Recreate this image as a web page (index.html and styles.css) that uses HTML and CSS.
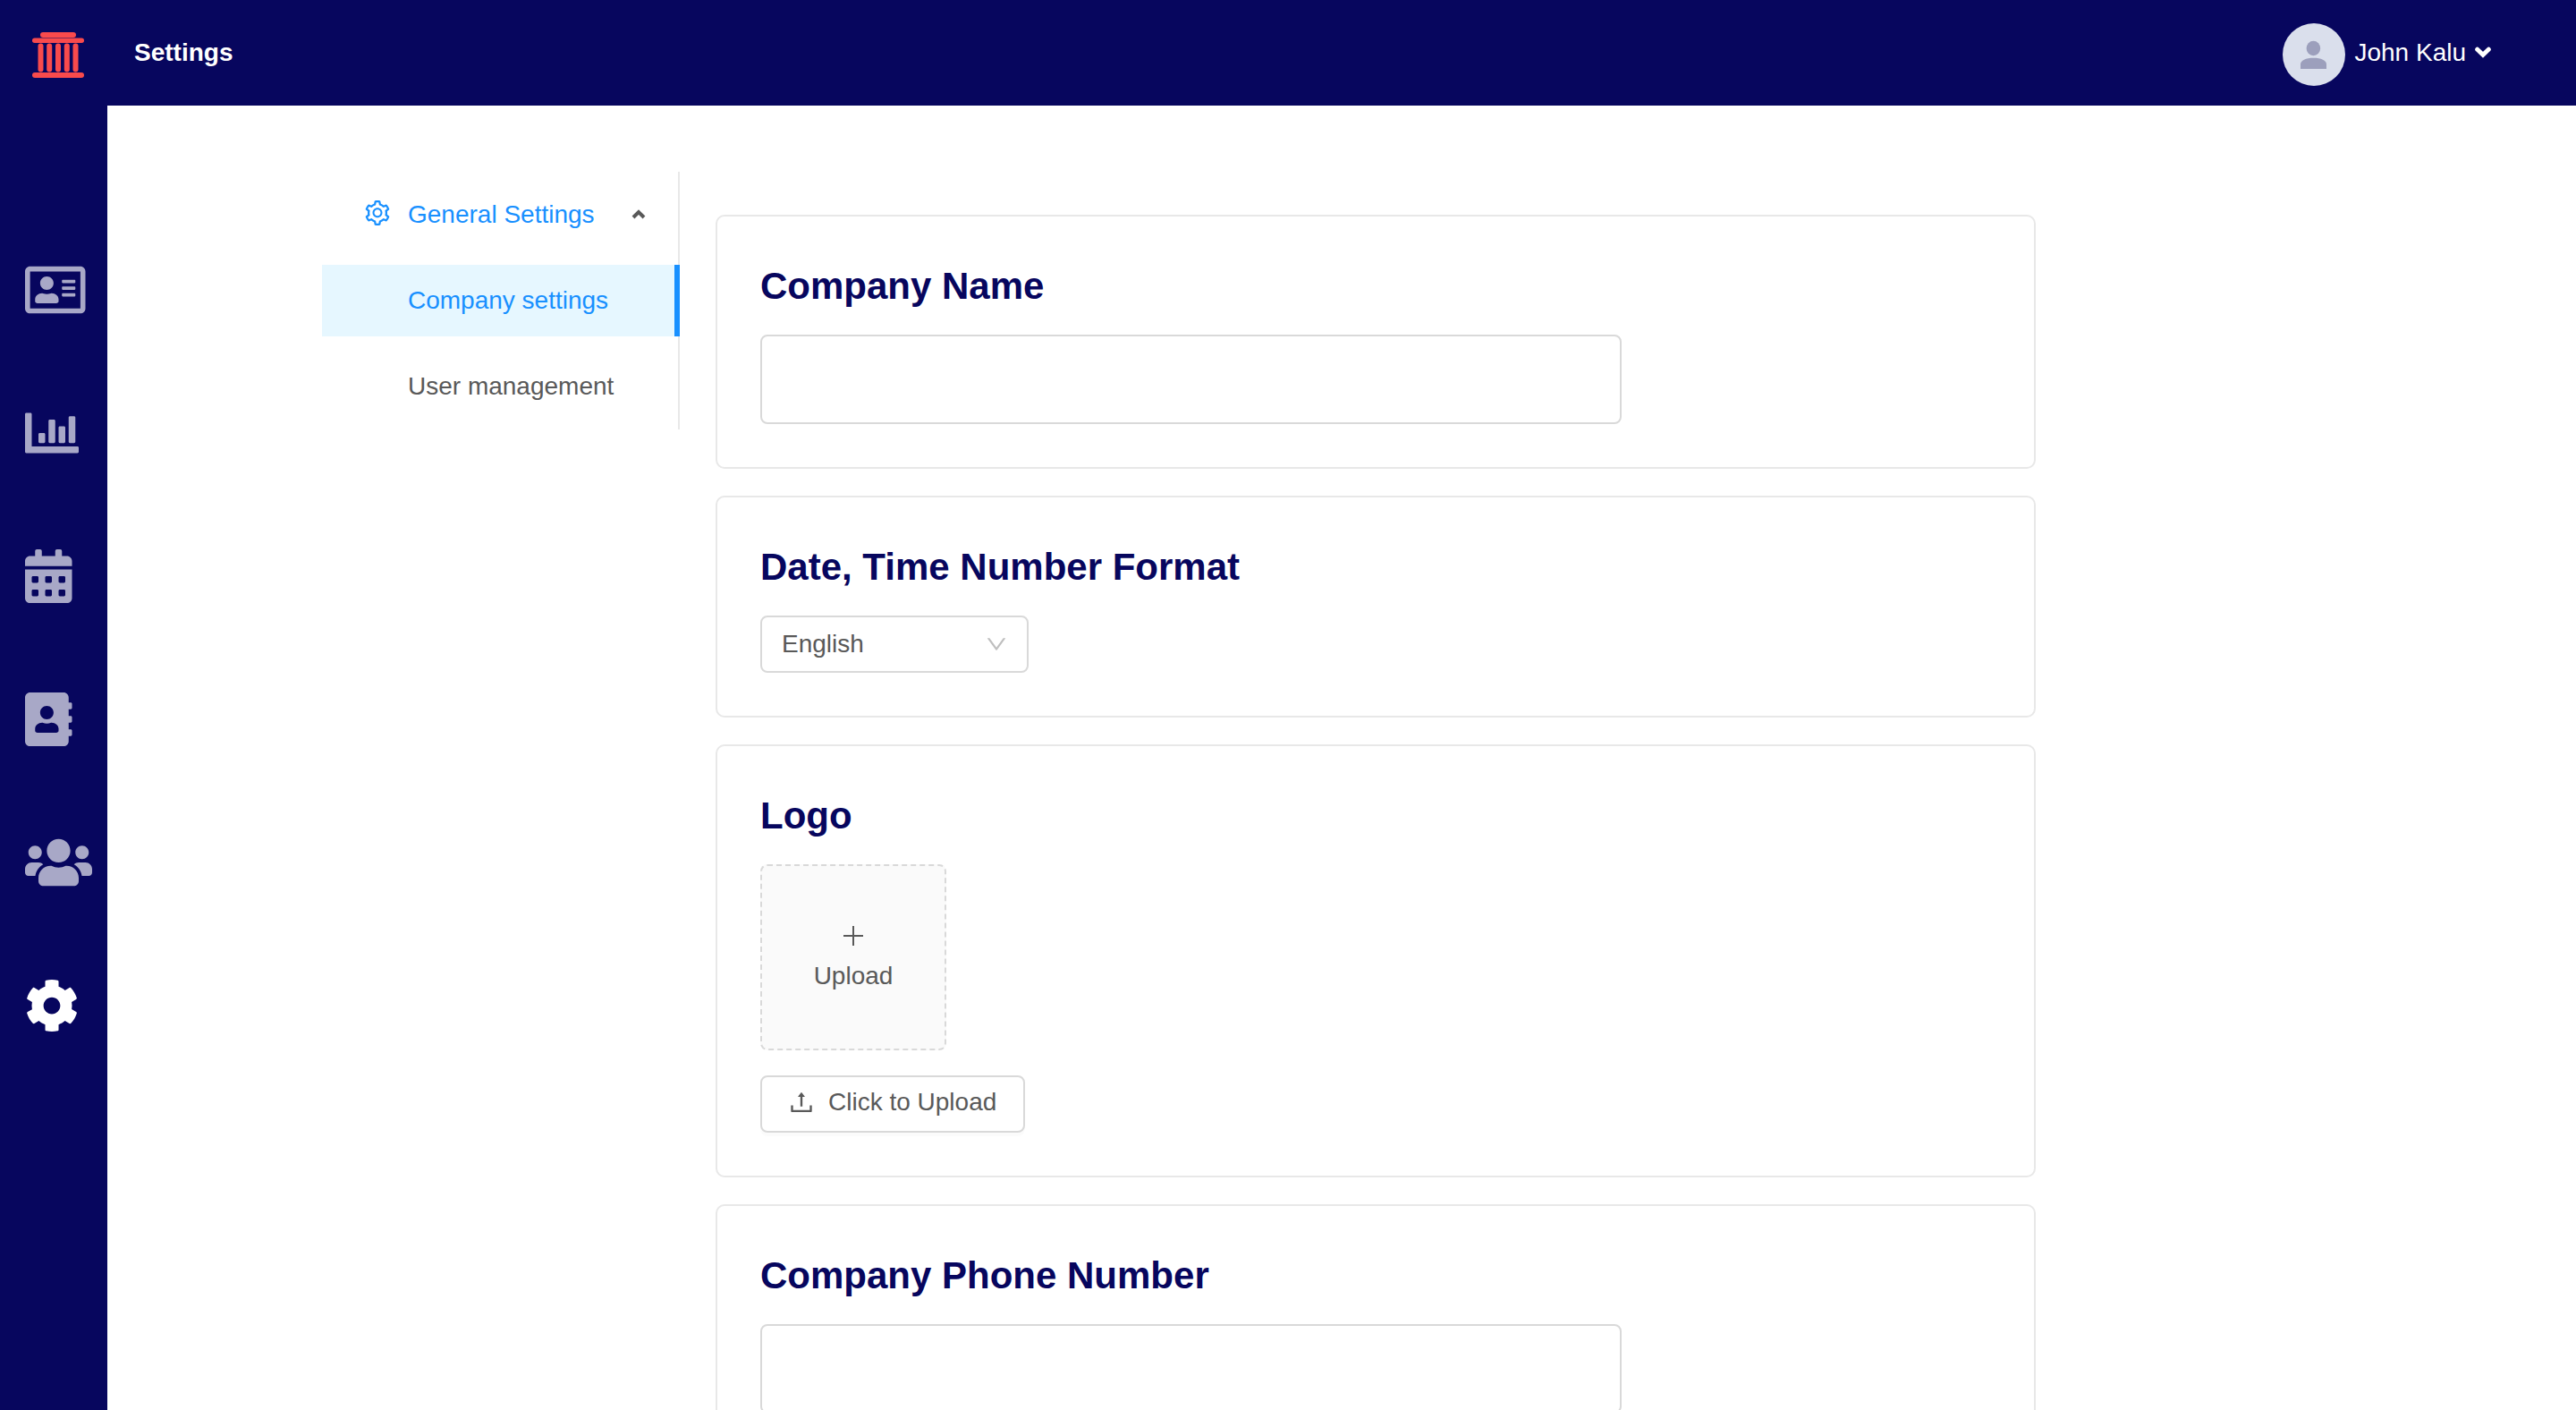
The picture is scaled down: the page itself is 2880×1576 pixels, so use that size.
FILE: index.html
```html
<!DOCTYPE html>
<html lang="en">
<head>
  <meta charset="utf-8">
  <meta name="viewport" content="width=device-width, initial-scale=1">
  <title>Settings</title>
  <link rel="stylesheet" href="styles.css">
</head>
<body>
  <div class="app">
    <header class="header">
      <a class="brand" href="#" aria-label="Home">
        <svg class="brand-logo" viewBox="0 0 58 51" aria-hidden="true">
          <rect x="9" y="0" width="40" height="6" rx="3"/>
          <rect x="0" y="6.500" width="58" height="5.500" rx="2.700"/>
          <rect x="6.5" y="12.5" width="6" height="32" rx="3"/>
          <rect x="16.2" y="12.5" width="6" height="32" rx="3"/>
          <rect x="26" y="12.5" width="6" height="32" rx="3"/>
          <rect x="35.8" y="12.5" width="6" height="32" rx="3"/>
          <rect x="45.5" y="12.5" width="6" height="32" rx="3"/>
          <rect x="0" y="45" width="58" height="6" rx="3"/>
        </svg>
      </a>
      <h1 class="header-title">Settings</h1>
      <button class="user" type="button">
        <svg class="avatar" viewBox="0 0 70 70" aria-hidden="true">
          <circle cx="35" cy="35" r="35" fill="#dadfec"/>
          <ellipse cx="34.4" cy="28" rx="7.8" ry="8.3" fill="#9c9fbc"/>
          <path d="M20 51v-5c0-4.500 6-7.200 14.500-7.200S49 41.500 49 46v5z" fill="#9c9fbc"/>
        </svg>
        <span class="user-name">John Kalu</span>
        <svg class="user-caret" viewBox="0 0 18 20" aria-hidden="true"><path d="M2.700 7.200L9 13.200l6.300-6"/></svg>
      </button>
    </header>

    <div class="body">
      <nav class="sidebar" aria-label="Main">
        <a class="side-link" href="#" aria-label="Cases">
          <svg viewBox="0 0 576 512"><path d="M528 32H48C21.500 32 0 53.500 0 80v352c0 26.500 21.500 48 48 48h480c26.500 0 48-21.500 48-48V80c0-26.500-21.500-48-48-48zm0 400H48V80h480v352zM208 256c35.300 0 64-28.700 64-64s-28.700-64-64-64-64 28.700-64 64 28.700 64 64 64zm-89.600 128h179.200c12.400 0 22.400-8.600 22.400-19.200v-19.200c0-31.800-30.100-57.600-67.200-57.600-10.800 0-18.700 8-44.800 8-26.900 0-33.400-8-44.800-8-37.100 0-67.200 25.800-67.200 57.600v19.200c0 10.600 10 19.200 22.400 19.200zM360 320h112c4.400 0 8-3.600 8-8v-16c0-4.400-3.600-8-8-8H360c-4.400 0-8 3.600-8 8v16c0 4.400 3.600 8 8 8zm0-64h112c4.400 0 8-3.600 8-8v-16c0-4.400-3.600-8-8-8H360c-4.400 0-8 3.600-8 8v16c0 4.400 3.600 8 8 8zm0-64h112c4.400 0 8-3.600 8-8v-16c0-4.400-3.600-8-8-8H360c-4.400 0-8 3.600-8 8v16c0 4.400 3.600 8 8 8z"/></svg>
        </a>
        <a class="side-link" href="#" aria-label="Reports">
          <svg viewBox="0 0 512 512"><path d="M500 384c6.600 0 12 5.400 12 12v40c0 6.600-5.400 12-12 12H12c-6.600 0-12-5.400-12-12V76c0-6.600 5.400-12 12-12h40c6.600 0 12 5.400 12 12v308h436zm-308-44v-72c0-6.600-5.400-12-12-12h-40c-6.600 0-12 5.400-12 12v72c0 6.600 5.400 12 12 12h40c6.600 0 12-5.400 12-12zm192 0V204c0-6.600-5.400-12-12-12h-40c-6.600 0-12 5.400-12 12v136c0 6.600 5.400 12 12 12h40c6.600 0 12-5.400 12-12zm-96 0V140c0-6.600-5.400-12-12-12h-40c-6.600 0-12 5.400-12 12v200c0 6.600 5.400 12 12 12h40c6.600 0 12-5.400 12-12zm192 0V108c0-6.600-5.400-12-12-12h-40c-6.600 0-12 5.400-12 12v232c0 6.600 5.400 12 12 12h40c6.600 0 12-5.400 12-12z"/></svg>
        </a>
        <a class="side-link" href="#" aria-label="Calendar">
          <svg viewBox="0 0 448 512"><path d="M0 464c0 26.500 21.500 48 48 48h352c26.500 0 48-21.500 48-48V192H0v272zm320-196c0-6.600 5.400-12 12-12h40c6.600 0 12 5.400 12 12v40c0 6.600-5.400 12-12 12h-40c-6.600 0-12-5.400-12-12v-40zm0 128c0-6.600 5.400-12 12-12h40c6.600 0 12 5.400 12 12v40c0 6.600-5.400 12-12 12h-40c-6.600 0-12-5.400-12-12v-40zM192 268c0-6.600 5.400-12 12-12h40c6.600 0 12 5.400 12 12v40c0 6.600-5.400 12-12 12h-40c-6.600 0-12-5.400-12-12v-40zm0 128c0-6.600 5.400-12 12-12h40c6.600 0 12 5.400 12 12v40c0 6.600-5.400 12-12 12h-40c-6.600 0-12-5.400-12-12v-40zM64 268c0-6.600 5.400-12 12-12h40c6.600 0 12 5.400 12 12v40c0 6.600-5.400 12-12 12H76c-6.600 0-12-5.400-12-12v-40zm0 128c0-6.600 5.400-12 12-12h40c6.600 0 12 5.400 12 12v40c0 6.600-5.400 12-12 12H76c-6.600 0-12-5.400-12-12v-40zM400 64h-48V16c0-8.800-7.200-16-16-16h-32c-8.800 0-16 7.200-16 16v48H160V16c0-8.800-7.200-16-16-16h-32c-8.800 0-16 7.200-16 16v48H48C21.500 64 0 85.500 0 112v48h448v-48c0-26.500-21.500-48-48-48z"/></svg>
        </a>
        <a class="side-link" href="#" aria-label="Contacts">
          <svg viewBox="0 0 448 512"><path d="M436 160c6.600 0 12-5.400 12-12v-40c0-6.600-5.400-12-12-12h-20V48c0-26.500-21.500-48-48-48H48C21.500 0 0 21.500 0 48v416c0 26.500 21.500 48 48 48h320c26.500 0 48-21.500 48-48v-48h20c6.600 0 12-5.400 12-12v-40c0-6.600-5.400-12-12-12h-20v-64h20c6.600 0 12-5.400 12-12v-40c0-6.600-5.400-12-12-12h-20v-64h20zm-228-32c35.300 0 64 28.700 64 64s-28.700 64-64 64-64-28.700-64-64 28.700-64 64-64zm112 236.800c0 10.600-10 19.200-22.400 19.200H118.400C106 384 96 375.400 96 364.800v-19.200c0-31.800 30.100-57.600 67.200-57.600h5c12.300 5.100 25.700 8 39.800 8s27.600-2.900 39.800-8h5c37.100 0 67.200 25.800 67.200 57.600v19.200z"/></svg>
        </a>
        <a class="side-link" href="#" aria-label="Team">
          <svg viewBox="0 0 640 512"><path d="M96 224c35.300 0 64-28.700 64-64s-28.700-64-64-64-64 28.700-64 64 28.700 64 64 64zm448 0c35.300 0 64-28.700 64-64s-28.700-64-64-64-64 28.700-64 64 28.700 64 64 64zm32 32h-64c-17.600 0-33.500 7.100-45.100 18.600 40.300 22.100 68.900 62 75.100 109.400h66c17.700 0 32-14.300 32-32v-32c0-35.300-28.700-64-64-64zm-256 0c61.900 0 112-50.100 112-112S381.900 32 320 32 208 82.100 208 144s50.100 112 112 112zm76.800 32h-8.300c-20.800 10-43.900 16-68.500 16s-47.600-6-68.500-16h-8.300C179.600 288 128 339.600 128 403.200V432c0 26.500 21.500 48 48 48h288c26.500 0 48-21.500 48-48v-28.800c0-63.600-51.600-115.200-115.200-115.200zm-223.700-13.400C161.500 263.100 145.600 256 128 256H64c-35.300 0-64 28.700-64 64v32c0 17.700 14.300 32 32 32h65.900c6.300-47.400 34.900-87.300 75.200-109.400z"/></svg>
        </a>
        <a class="side-link side-link-active" href="#" aria-label="Settings" aria-current="page">
          <svg viewBox="0 0 512 512"><path d="M487.400 315.700l-42.600-24.600c4.300-23.200 4.300-47 0-70.200l42.600-24.600c4.900-2.800 7.100-8.600 5.500-14-11.100-35.600-30-67.800-54.700-94.600-3.800-4.100-10-5.100-14.800-2.300L380.800 110c-17.900-15.400-38.500-27.300-60.800-35.100V25.800c0-5.600-3.900-10.500-9.400-11.700-36.700-8.200-74.300-7.800-109.200 0-5.500 1.200-9.400 6.100-9.400 11.700V75c-22.200 7.900-42.800 19.800-60.800 35.100L88.700 85.500c-4.900-2.800-11-1.900-14.800 2.300-24.700 26.700-43.600 58.900-54.700 94.600-1.700 5.400.6 11.200 5.500 14L67.300 221c-4.300 23.200-4.300 47 0 70.200l-42.600 24.600c-4.900 2.800-7.100 8.600-5.500 14 11.100 35.600 30 67.800 54.700 94.600 3.800 4.100 10 5.100 14.800 2.300l42.600-24.600c17.900 15.400 38.500 27.300 60.800 35.100v49.200c0 5.600 3.900 10.500 9.400 11.700 36.700 8.200 74.300 7.800 109.200 0 5.500-1.200 9.400-6.100 9.400-11.700v-49.200c22.200-7.900 42.800-19.800 60.800-35.100l42.600 24.600c4.900 2.800 11 1.900 14.800-2.300 24.700-26.700 43.600-58.900 54.700-94.600 1.500-5.500-.7-11.300-5.600-14.100zM256 336c-44.100 0-80-35.900-80-80s35.900-80 80-80 80 35.900 80 80-35.900 80-80 80z"/></svg>
        </a>
      </nav>

      <main class="main">
        <nav class="menu" aria-label="Settings sections">
          <button class="menu-title" type="button" aria-expanded="true">
            <svg class="menu-icon" viewBox="64 64 896 896" aria-hidden="true"><path d="M924.8 625.7l-65.5-56c3.1-19 4.7-38.4 4.7-57.8s-1.6-38.8-4.7-57.8l65.5-56a32.03 32.03 0 0 0 9.3-35.2l-.9-2.6a443.74 443.74 0 0 0-79.7-137.9l-1.8-2.1a32.12 32.12 0 0 0-35.1-9.5l-81.3 28.9c-30-24.6-63.5-44-99.7-57.6l-15.700-85a32.05 32.05 0 0 0-25.8-25.7l-2.7-.5c-52.1-9.4-106.9-9.4-159 0l-2.700.5a32.05 32.05 0 0 0-25.8 25.7l-15.8 85.4a351.86 351.86 0 0 0-99 57.4l-81.9-29.1a32 32 0 0 0-35.1 9.5l-1.8 2.1a446.02 446.02 0 0 0-79.7 137.9l-.9 2.6c-4.5 12.5-.8 26.5 9.3 35.2l66.3 56.6c-3.1 18.8-4.6 38-4.6 57.100 0 19.2 1.5 38.4 4.6 57.1L99 625.5a32.03 32.03 0 0 0-9.3 35.2l.9 2.6c18.1 50.4 44.9 96.9 79.7 137.9l1.8 2.1a32.12 32.12 0 0 0 35.1 9.5l81.9-29.1c29.8 24.5 63.1 43.9 99 57.4l15.8 85.4a32.05 32.05 0 0 0 25.8 25.7l2.7.5a449.4 449.4 0 0 0 159 0l2.7-.5a32.05 32.05 0 0 0 25.8-25.7l15.7-85a350 350 0 0 0 99.7-57.6l81.3 28.9a32 32 0 0 0 35.1-9.5l1.8-2.1c34.8-41.1 61.6-87.5 79.7-137.9l.9-2.6c4.5-12.3.8-26.3-9.3-35zM788.3 465.9c2.5 15.1 3.8 30.6 3.8 46.1s-1.3 31-3.8 46.1l-6.6 40.1 74.7 63.9a370.03 370.03 0 0 1-42.6 73.6L721 702.8l-31.4 25.8c-23.9 19.6-50.5 35-79.3 45.8l-38.1 14.3-17.9 97a377.5 377.5 0 0 1-85 0l-17.9-97.2-37.8-14.5c-28.5-10.8-55-26.2-78.7-45.7l-31.4-25.9-93.4 33.2c-17-22.9-31.2-47.6-42.6-73.6l75.5-64.5-6.5-40c-2.4-14.9-3.7-30.3-3.7-45.500 0-15.3 1.2-30.6 3.7-45.5l6.5-40-75.5-64.5c11.3-26.1 25.6-50.7 42.6-73.6l93.4 33.2 31.4-25.9c23.7-19.5 50.2-34.9 78.7-45.7l37.9-14.3 17.9-97.2c28.1-3.2 56.8-3.2 85 0l17.9 97 38.1 14.3c28.7 10.8 55.4 26.2 79.3 45.8l31.4 25.8 92.8-32.9c17 22.9 31.2 47.6 42.6 73.6L781.8 426l6.5 39.9zM512 326c-97.2 0-176 78.8-176 176s78.8 176 176 176 176-78.8 176-176-78.8-176-176-176zm79.2 255.2A111.6 111.6 0 0 1 512 614c-29.9 0-58-11.7-79.2-32.8A111.6 111.6 0 0 1 400 502c0-29.9 11.7-58 32.8-79.2C454 401.6 482.1 390 512 390c29.9 0 58 11.6 79.2 32.8A111.6 111.6 0 0 1 624 502c0 29.9-11.7 58-32.8 79.2z"/></svg>
            <span>General Settings</span>
            <svg class="menu-caret" viewBox="0 0 16 12" aria-hidden="true"><path d="M2 9l6-6 6 6"/></svg>
          </button>
          <a class="menu-item menu-item-selected" href="#" aria-current="page">Company settings</a>
          <a class="menu-item" href="#">User management</a>
        </nav>

        <form class="cards">
          <section class="card">
            <label class="card-title" for="company-name">Company Name</label>
            <input class="text-input" id="company-name" type="text">
          </section>

          <section class="card">
            <label class="card-title" for="format">Date, Time Number Format</label>
            <div class="select">
              <select class="select-field" id="format">
                <option>English</option>
              </select>
              <svg class="select-arrow" viewBox="64 64 896 896" aria-hidden="true"><path d="M884 256h-75c-5.100 0-9.900 2.500-12.900 6.600L512 654.200 227.900 262.600c-3-4.100-7.800-6.600-12.900-6.600h-75c-6.500 0-10.300 7.400-6.500 12.700l352.600 486.100c12.800 17.600 39 17.600 51.700 0l352.600-486.100c3.900-5.300.1-12.700-6.400-12.700z"/></svg>
            </div>
          </section>

          <section class="card">
            <h2 class="card-title">Logo</h2>
            <button class="dropzone" type="button">
              <svg class="icon" viewBox="0 0 28 28" aria-hidden="true"><path d="M13 3h2v22h-2zM3 13h22v2H3z"/></svg>
              <span>Upload</span>
            </button>
            <button class="upload-button" type="button">
              <svg class="icon" viewBox="64 64 896 896" aria-hidden="true"><path d="M400 317.700h73.900V656c0 4.400 3.600 8 8 8h60c4.400 0 8-3.600 8-8V317.700H624c6.700 0 10.400-7.700 6.300-12.900L518.300 163a8 8 0 0 0-12.600 0l-112 141.700c-4.100 5.300-.4 13 6.300 13zM878 626h-60c-4.400 0-8 3.600-8 8v154H214V634c0-4.400-3.600-8-8-8h-60c-4.400 0-8 3.600-8 8v198c0 17.700 14.300 32 32 32h684c17.700 0 32-14.300 32-32V634c0-4.400-3.600-8-8-8z"/></svg>
              <span>Click to Upload</span>
            </button>
          </section>

          <section class="card">
            <label class="card-title" for="company-phone">Company Phone Number</label>
            <input class="text-input" id="company-phone" type="tel">
          </section>
        </form>
      </main>
    </div>
  </div>
</body>
</html>
```

FILE: styles.css
```css
:root {
  --navy: #07065e;
  --text: #595959;
  --blue: #1890ff;
  --border: #d9d9d9;
}

*,
*::before,
*::after {
  box-sizing: border-box;
}

body {
  margin: 0;
  background: #fff;
  color: var(--text);
  font-family: "Liberation Sans", Helvetica, Arial, sans-serif;
  font-size: 28px;
  line-height: 42px;
}

button,
input,
select {
  margin: 0;
  color: inherit;
  font: inherit;
}

button {
  cursor: pointer;
}

a {
  color: inherit;
  text-decoration: none;
}

svg {
  display: block;
  flex: none;
  fill: currentColor;
}

.app {
  display: flex;
  flex-direction: column;
  height: 100vh;
  overflow: hidden;
}

/* Header */

.header {
  display: flex;
  align-items: center;
  flex: none;
  height: 118px;
  padding: 4px 95px 0 36px;
  background: var(--navy);
  color: #fff;
}

.brand {
  margin-right: 56px;
  color: #f94a4c;
}

.brand-logo {
  width: 58px;
  height: 51px;
}

.header-title {
  margin: 0;
  padding-bottom: 4px;
  font-size: 28px;
  font-weight: 700;
}

.user {
  display: flex;
  align-items: center;
  gap: 10px;
  margin-left: auto;
  padding: 0;
  border: 0;
  background: none;
}

.avatar {
  width: 70px;
  height: 70px;
}

.user-name {
  padding-bottom: 4px;
}

.user-caret {
  width: 18px;
  height: 20px;
  margin-bottom: 6px;
  fill: none;
  stroke: currentColor;
  stroke-linecap: round;
  stroke-width: 5;
}

/* Icon sidebar */

.body {
  display: flex;
  flex: 1;
  min-height: 0;
}

.sidebar {
  display: flex;
  flex-direction: column;
  flex: none;
  gap: 100px;
  width: 120px;
  padding: 176px 0 0 28px;
  overflow: hidden;
  background: var(--navy);
}

.side-link {
  color: rgba(255, 255, 255, 0.65);
}

.side-link-active {
  color: #fff;
}

.side-link svg {
  width: auto;
  height: 60px;
}

/* Content area */

.main {
  display: flex;
  align-items: flex-start;
  flex: 1;
  gap: 40px;
  min-width: 0;
  padding: 74px 604px 48px 240px;
  overflow-y: auto;
  scrollbar-width: none;
}

.menu {
  display: flex;
  flex-direction: column;
  flex: none;
  gap: 16px;
  width: 400px;
  padding: 8px 0;
  box-shadow: inset -2px 0 #e8e8e8;
}

.menu-title {
  display: flex;
  align-items: center;
  height: 80px;
  padding: 0 38px 0 48px;
  border: 0;
  background: none;
  color: var(--blue);
}

.menu-icon {
  width: 28px;
  height: 28px;
  margin: 0 20px 4px 0;
}

.menu-caret {
  width: 16px;
  height: 12px;
  margin-left: auto;
  fill: none;
  stroke: var(--text);
  stroke-width: 4;
}

.menu-item {
  height: 80px;
  padding-left: 96px;
  line-height: 80px;
}

.menu-item-selected {
  border-right: 6px solid var(--blue);
  background: #e6f7ff;
  color: var(--blue);
}

/* Setting cards */

.cards {
  display: flex;
  flex-direction: column;
  flex: 1;
  gap: 30px;
  min-width: 0;
  padding-top: 48px;
}

.card {
  display: flex;
  flex-direction: column;
  align-items: flex-start;
  padding: 48px;
  border: 2px solid #e8e8e8;
  border-radius: 10px;
}

.card-title {
  margin: 0 0 24px;
  color: var(--navy);
  font-size: 42px;
  font-weight: 700;
  line-height: 60px;
}

.text-input {
  width: 70%;
  height: 100px;
  padding: 0 22px;
  border: 2px solid var(--border);
  border-radius: 8px;
  background: #fff;
}

.select {
  display: grid;
  align-items: center;
  width: 300px;
}

.select-field,
.select-arrow {
  grid-area: 1 / 1;
}

.select-field {
  width: 100%;
  height: 64px;
  padding: 0 48px 0 22px;
  appearance: none;
  border: 2px solid var(--border);
  border-radius: 8px;
  background: #fff;
}

.select-arrow {
  justify-self: end;
  width: 24px;
  height: 24px;
  margin-right: 24px;
  color: #bfbfbf;
  pointer-events: none;
}

.icon {
  width: 28px;
  height: 28px;
}

.dropzone {
  display: flex;
  flex-direction: column;
  align-items: center;
  justify-content: center;
  gap: 10px;
  width: 208px;
  height: 208px;
  margin-bottom: 28px;
  padding: 4px 0 0;
  border: 2px dashed var(--border);
  border-radius: 8px;
  background: #fafafa;
}

.upload-button {
  display: flex;
  align-items: center;
  gap: 16px;
  height: 64px;
  padding: 0 30px 4px;
  border: 2px solid var(--border);
  border-radius: 8px;
  background: #fff;
  box-shadow: 0 4px 0 rgba(0, 0, 0, 0.015);
}
```
